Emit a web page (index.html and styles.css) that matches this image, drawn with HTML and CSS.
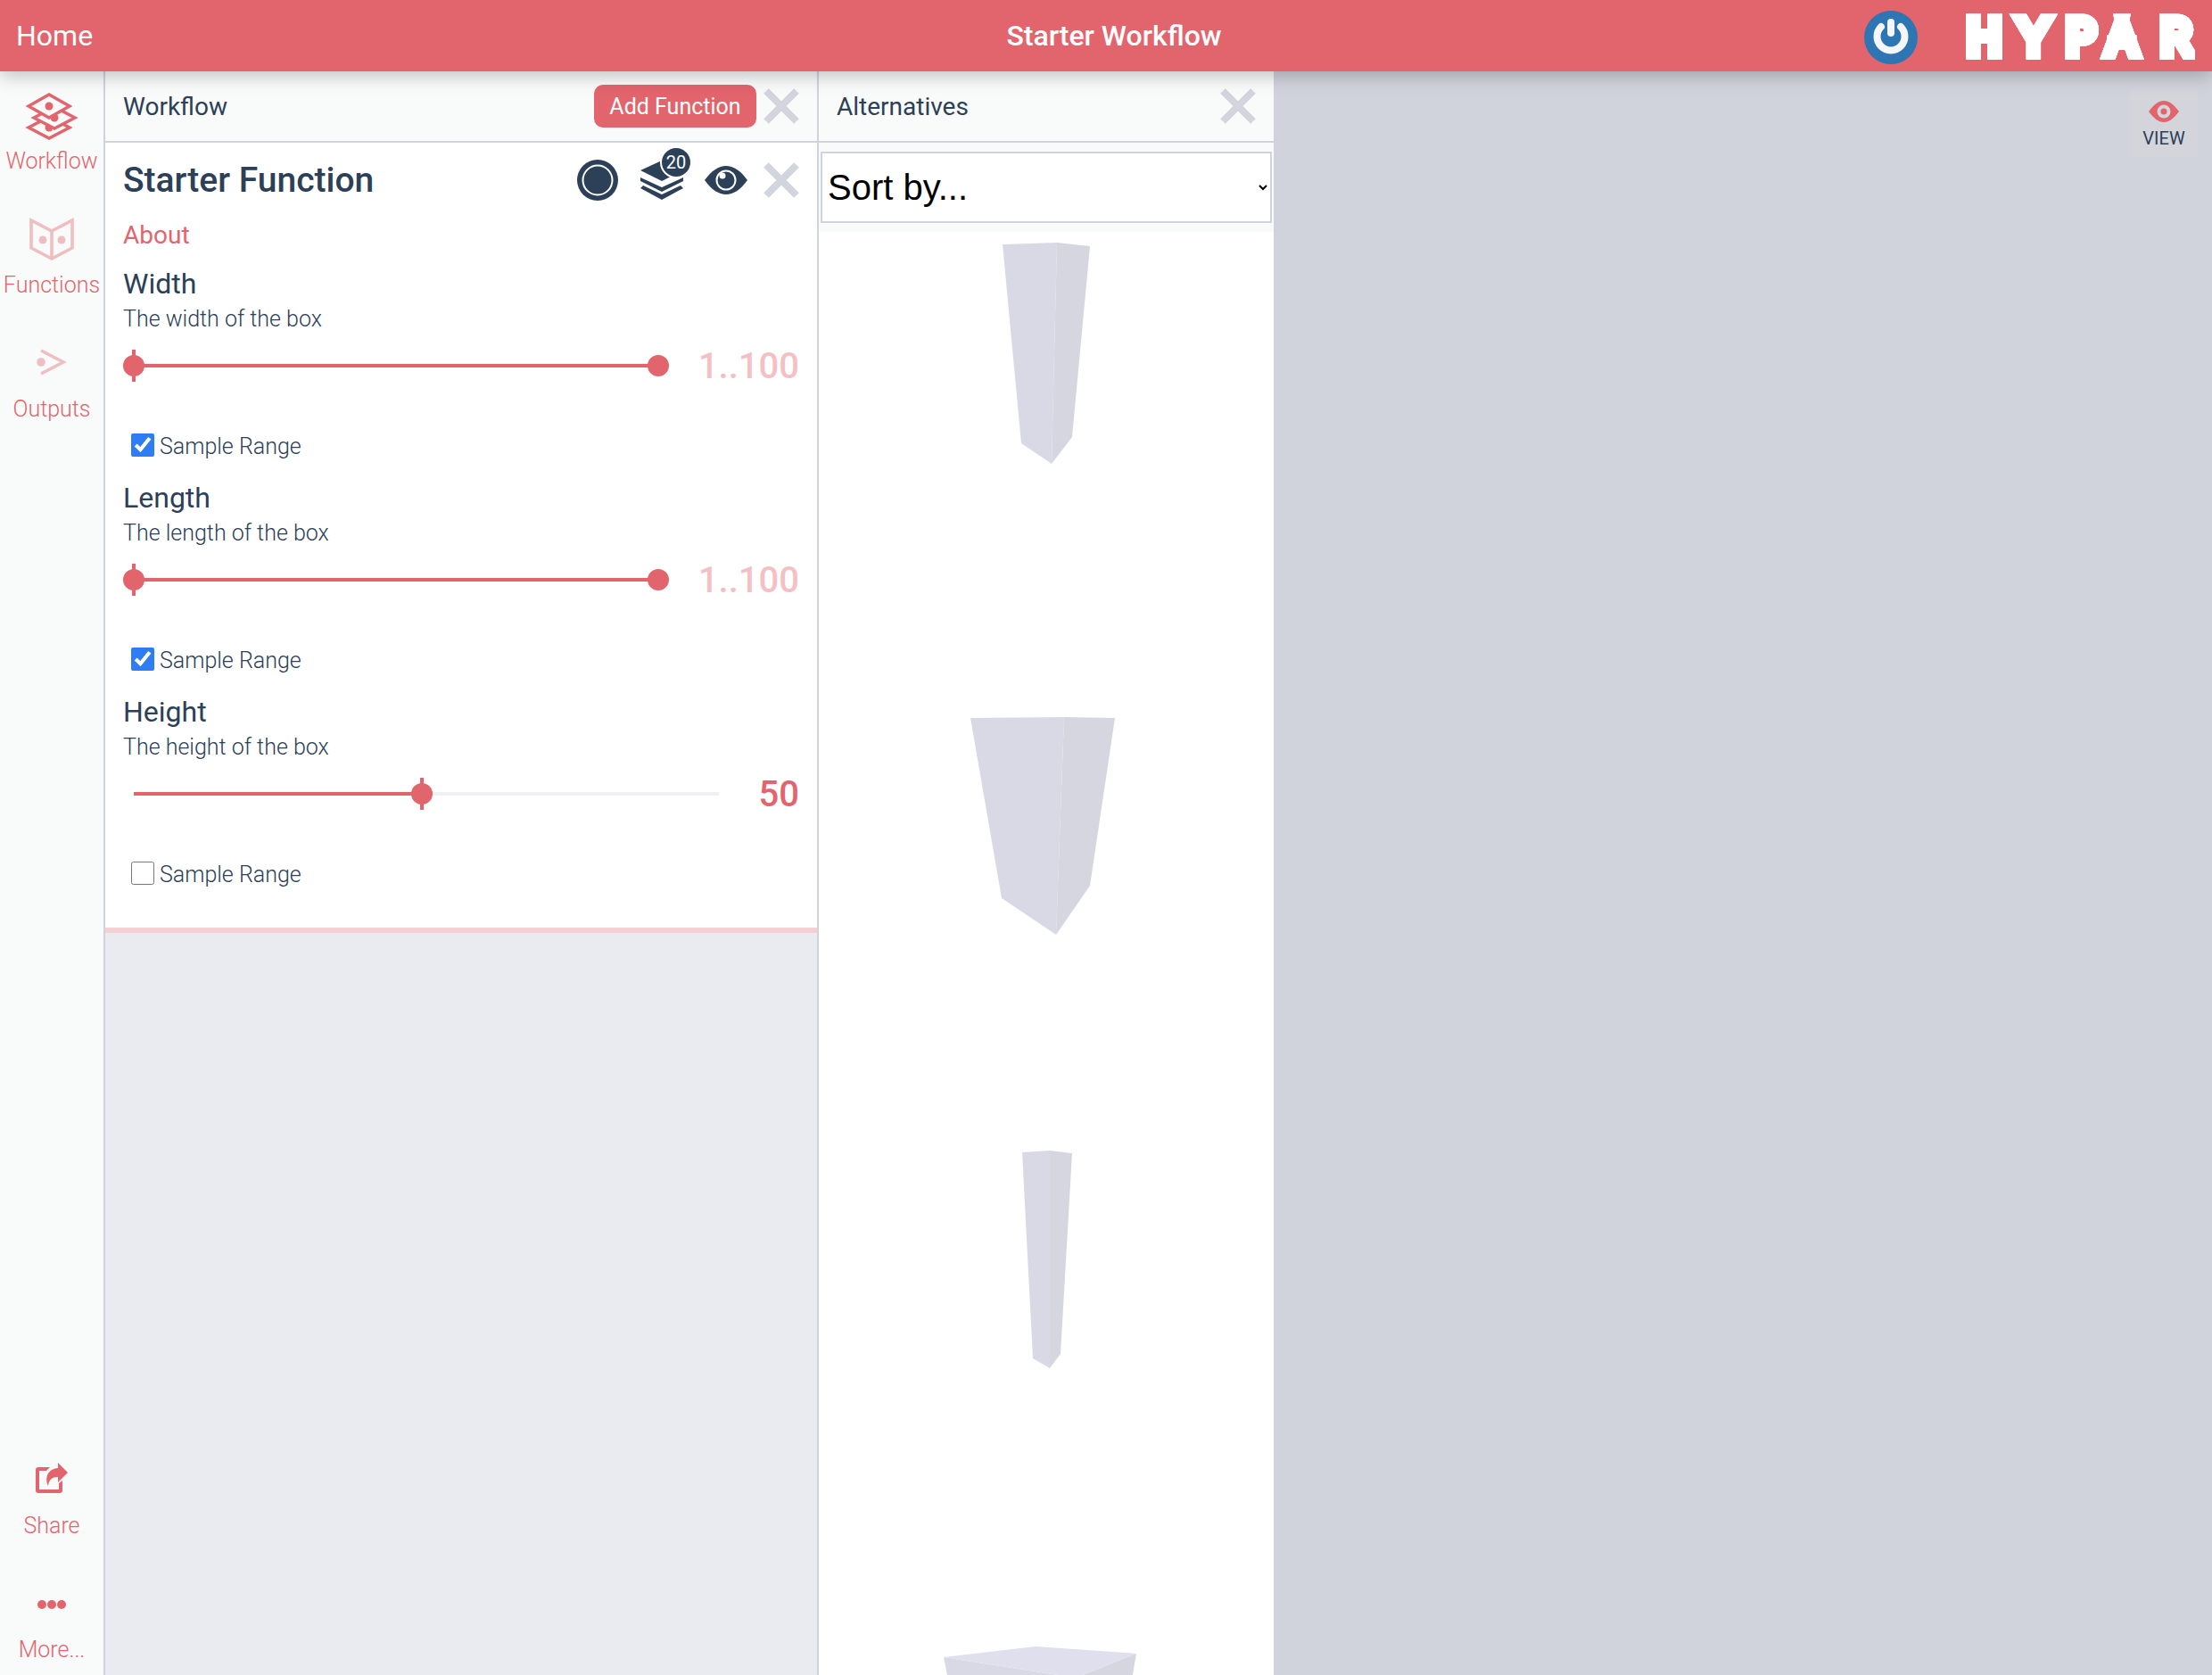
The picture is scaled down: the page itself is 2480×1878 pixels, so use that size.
FILE: index.html
```html
<!DOCTYPE html>
<html lang="en">
<head>
  <meta charset="UTF-8">
  <title>Starter Workflow</title>
  <link rel="stylesheet" href="styles.css">
</head>
<body>
  <div class="app">

    <!-- Top bar -->
    <header class="topbar">
      <div class="topbar-home">Home</div>
      <div class="topbar-title">Starter Workflow</div>
      <div class="topbar-right">
        <svg class="power" width="60" height="60" viewBox="0 0 60 60">
          <circle cx="30" cy="30" r="30" fill="#2e75b4"/>
          <path d="M19 18 A 15.5 15.5 0 1 0 41 18" fill="none" stroke="#f4f6f8" stroke-width="8" stroke-linecap="round"/>
          <path d="M30 13 V 25" fill="none" stroke="#f4f6f8" stroke-width="8" stroke-linecap="round"/>
        </svg>
        <svg class="logo" width="275" height="80" viewBox="0 0 275 80">
          <text id="hypar-word" class="logo-layer logo-w1" x="7 65 118 164 224" y="58.5">HYPAR</text>
          <use href="#hypar-word" class="logo-r1"/>
          <use href="#hypar-word" class="logo-w2"/>
          <use href="#hypar-word" class="logo-r2"/>
        </svg>
      </div>
    </header>

    <div class="main">

      <!-- Left nav -->
      <nav class="sidebar">
        <div class="nav-group">
          <div class="nav-item">
            <svg class="nav-icon" width="60" height="60" viewBox="0 0 60 60" fill="#f9fbfa" stroke="#e2646d" stroke-width="3.4">
              <path d="M4 43 L27 31 L50 43 L27 55 Z"/>
              <circle cx="27" cy="43" r="4.5" fill="#e2646d" stroke="none"/>
              <path d="M10 32 L33 20 L56 32 L33 44 Z"/>
              <circle cx="33" cy="32" r="4.5" fill="#e2646d" stroke="none"/>
              <path d="M4 19 L27 6 L50 19 L27 32 Z"/>
              <circle cx="27" cy="19" r="4.5" fill="#e2646d" stroke="none"/>
            </svg>
            <span>Workflow</span>
          </div>
          <div class="nav-item">
            <svg class="nav-icon dim" width="60" height="60" viewBox="0 0 60 60" fill="none" stroke="#e2646d" stroke-width="3.6">
              <path d="M7 8 L30 20 L53 8 V 39 L30 51 L7 39 Z"/>
              <path d="M30 20 V 51"/>
              <circle cx="20" cy="30" r="4.5" fill="#e2646d" stroke="none"/>
              <circle cx="41" cy="30" r="4.5" fill="#e2646d" stroke="none"/>
            </svg>
            <span>Functions</span>
          </div>
          <div class="nav-item">
            <svg class="nav-icon dim" width="60" height="60" viewBox="0 0 60 60" fill="none" stroke="#e2646d" stroke-width="3.6">
              <path d="M18 15 L43 28 L18 41"/>
              <circle cx="18" cy="28" r="4.8" fill="#e2646d" stroke="none"/>
            </svg>
            <span>Outputs</span>
          </div>
        </div>
        <div class="nav-group">
          <div class="nav-item">
            <svg class="nav-icon" width="60" height="60" viewBox="0 0 60 60" fill="#e2646d">
              <path d="M12 18 Q12 15 15 15 H28 L24 19 H16 V40 H38 V33 L42 30 V41 Q42 44 39 44 H15 Q12 44 12 41 Z"/>
              <path d="M37 10 L48 21 L37 32 V26 C30 26 27 29 26 36 C22 27 25 17 37 16 Z"/>
            </svg>
            <span>Share</span>
          </div>
          <div class="nav-item nav-more">
            <svg class="nav-icon" width="60" height="60" viewBox="0 0 60 60" fill="#e2646d">
              <circle cx="19" cy="30" r="5"/>
              <circle cx="30" cy="30" r="5"/>
              <circle cx="41" cy="30" r="5"/>
            </svg>
            <span>More...</span>
          </div>
        </div>
      </nav>

      <!-- Workflow panel -->
      <section class="panel panel-workflow">
        <div class="panel-head">
          <div class="panel-title">Workflow</div>
          <button class="btn-add">Add Function</button>
          <svg class="close" width="40" height="40" viewBox="0 0 40 40"><path d="M3 3 L37 37 M37 3 L3 37"/></svg>
        </div>

        <div class="card">
          <div class="card-head">
            <h2 class="card-title">Starter Function</h2>
            <svg class="tool tool-ring" width="46" height="46" viewBox="0 0 46 46">
              <circle cx="23" cy="23" r="23" fill="#2c4058"/>
              <circle cx="23" cy="23" r="16.5" fill="#2c4058" stroke="#fff" stroke-width="2"/>
            </svg>
            <div class="tool tool-layers">
              <svg width="48" height="44" viewBox="0 0 48 44" fill="#2c4058">
                <path d="M0 11 L24 0 L48 11 L24 23 Z"/>
                <path d="M0 23 V19 L24 30 L48 19 V23 L24 35 Z"/>
                <path d="M3 28 L24 38 L45 28 L48 31 L24 44 L0 31 Z"/>
              </svg>
              <span class="badge">20</span>
            </div>
            <svg class="tool tool-eye" width="48" height="32" viewBox="0 0 48 32">
              <path d="M0 16 C8 5 16 0 24 0 C32 0 40 5 48 16 C40 27 32 32 24 32 C16 32 8 27 0 16 Z" fill="#2c4058"/>
              <circle cx="24" cy="16" r="10.5" fill="#2c4058" stroke="#fff" stroke-width="2"/>
              <circle cx="20" cy="11" r="3.5" fill="#fff"/>
            </svg>
            <svg class="close" width="40" height="40" viewBox="0 0 40 40"><path d="M3 3 L37 37 M37 3 L3 37"/></svg>
          </div>

          <div class="about">About</div>

          <div class="field">
            <div class="field-name">Width</div>
            <div class="field-desc">The width of the box</div>
            <div class="slider">
              <div class="track">
                <div class="track-fill" style="width: 100%"></div>
                <div class="thumb thumb-tick" style="left: 0%"></div>
                <div class="thumb" style="left: 100%"></div>
              </div>
              <div class="value value-range">1..100</div>
            </div>
            <label class="sample"><input type="checkbox" checked>Sample Range</label>
          </div>

          <div class="field">
            <div class="field-name">Length</div>
            <div class="field-desc">The length of the box</div>
            <div class="slider">
              <div class="track">
                <div class="track-fill" style="width: 100%"></div>
                <div class="thumb thumb-tick" style="left: 0%"></div>
                <div class="thumb" style="left: 100%"></div>
              </div>
              <div class="value value-range">1..100</div>
            </div>
            <label class="sample"><input type="checkbox" checked>Sample Range</label>
          </div>

          <div class="field">
            <div class="field-name">Height</div>
            <div class="field-desc">The height of the box</div>
            <div class="slider">
              <div class="track">
                <div class="track-fill" style="width: 49.3%"></div>
                <div class="thumb thumb-tick" style="left: 49.3%"></div>
              </div>
              <div class="value">50</div>
            </div>
            <label class="sample"><input type="checkbox">Sample Range</label>
          </div>
        </div>
      </section>

      <!-- Alternatives panel -->
      <section class="panel panel-alts">
        <div class="panel-head">
          <div class="panel-title">Alternatives</div>
          <svg class="close" width="40" height="40" viewBox="0 0 40 40"><path d="M3 3 L37 37 M37 3 L3 37"/></svg>
        </div>
        <div class="sort-bar">
          <select class="sort">
            <option>Sort by...</option>
          </select>
        </div>
        <div class="alts">
          <svg class="alt" viewBox="0 0 510 506">
            <polygon class="face-l" points="206,14 267,12 261,260 227,237"/>
            <polygon class="face-r" points="267,12 304,16 284,230 261,260"/>
          </svg>
          <svg class="alt" viewBox="0 0 510 506">
            <polygon class="face-l" points="170,39 275,38 266,282 205,241"/>
            <polygon class="face-r" points="275,38 332,39 304,227 266,282"/>
          </svg>
          <svg class="alt" viewBox="0 0 510 506">
            <polygon class="face-l" points="228,20 259,18 259,262 240,251"/>
            <polygon class="face-r" points="259,18 284,21 271,246 259,262"/>
          </svg>
          <svg class="alt" viewBox="0 0 510 506">
            <polygon class="face-l" points="140,80 268,100 268,200 160,180"/>
            <polygon class="face-r" points="356,76 296,100 296,200 340,170"/>
            <polygon class="face-t" points="140,80 243,68 356,76 296,100 268,100"/>
          </svg>
        </div>
      </section>

      <!-- Model view -->
      <div class="canvas">
        <div class="view-btn">
          <svg width="34" height="24" viewBox="0 0 34 24">
            <path d="M0 12 C6 4 11 0 17 0 C23 0 28 4 34 12 C28 20 23 24 17 24 C11 24 6 20 0 12 Z" fill="#e2646d"/>
            <circle cx="17" cy="12" r="7.5" fill="#d4d5da"/>
            <circle cx="17" cy="12" r="3.5" fill="#e2646d"/>
          </svg>
          <span>VIEW</span>
        </div>
      </div>
    </div>
  </div>
</body>
</html>
```

FILE: styles.css
```css
* {
  box-sizing: border-box;
}

body {
  margin: 0;
  font-family: Roboto, Arial, sans-serif;
  color: #2c4058;
}

.app {
  display: flex;
  flex-direction: column;
  height: 100vh;
  overflow: hidden;
}

/* Top bar */
.topbar {
  position: relative;
  z-index: 2;
  flex: 0 0 80px;
  display: grid;
  grid-template-columns: 1fr auto 1fr;
  align-items: center;
  padding: 0 0 0 18px;
  background-color: #e2646d;
  color: #fff;
  box-shadow: 0 4px 20px rgba(0, 0, 0, 0.25);
}

.topbar-home {
  font-size: 32px;
}

.topbar-title {
  font-size: 32px;
  font-weight: 500;
}

.topbar-right {
  display: flex;
  align-items: center;
  justify-content: flex-end;
}

.power {
  margin-right: 50px;
  margin-top: 4px;
}

.logo {
  margin-right: 5px;
}

.logo-layer {
  font-family: Roboto, sans-serif;
  font-size: 50px;
  font-weight: 100;
  stroke-linejoin: miter;
  stroke-miterlimit: 10;
}

.logo-w1 { fill: #fff; stroke: #fff; stroke-width: 15px; }
.logo-r1 { fill: #e2646d; stroke: #e2646d; stroke-width: 12px; }
.logo-w2 { fill: #fff; stroke: #fff; stroke-width: 8px; }
.logo-r2 { fill: #e2646d; stroke: #e2646d; stroke-width: 5px; }

.main {
  flex: 1;
  display: flex;
  min-height: 0;
}

/* Left nav */
.sidebar {
  flex: 0 0 118px;
  display: flex;
  flex-direction: column;
  justify-content: space-between;
  background-color: #f9fbfa;
  border-right: 2px solid #d0d2de;
}

.nav-item {
  display: flex;
  flex-direction: column;
  align-items: center;
  height: 139px;
  padding-top: 20px;
  font-size: 25px;
  font-weight: 300;
  color: #e2646d;
}

.nav-more {
  height: 129px;
}

.nav-icon {
  margin-bottom: 6px;
}

.dim {
  opacity: 0.4;
}

/* Panels */
.panel {
  display: flex;
  flex-direction: column;
}

.panel-workflow {
  flex: 0 0 800px;
  background-color: #e9ebf0;
  border-right: 2px solid #d0d2de;
}

.panel-alts {
  flex: 0 0 510px;
  background-color: #fff;
}

.panel-head {
  flex: 0 0 80px;
  display: flex;
  align-items: center;
  padding: 0 20px;
  background-color: #f9fbfa;
  border-bottom: 2px solid #d0d2de;
}

.panel-title {
  flex: 1;
  font-size: 28px;
}

.btn-add {
  width: 182px;
  height: 48px;
  margin-right: 8px;
  padding: 0;
  border: 0;
  border-radius: 10px;
  background-color: #e2646d;
  color: #fff;
  font-family: inherit;
  font-size: 25px;
}

.close {
  flex: none;
}

.close path {
  fill: none;
  stroke: #d2d4de;
  stroke-width: 8;
}

/* Function card */
.card {
  padding: 0 20px 22px;
  background-color: #fff;
  border-bottom: 6px solid #f4d0d3;
}

.card-head {
  display: flex;
  align-items: center;
  height: 84px;
}

.card-title {
  flex: 1;
  margin: 0;
  font-size: 39px;
  font-weight: 500;
}

.tool {
  flex: none;
}

.tool-ring {
  margin-right: 25px;
}

.tool-layers {
  position: relative;
  display: flex;
  margin-right: 24px;
}

.tool-eye {
  margin-right: 18px;
}

.badge {
  position: absolute;
  top: -16px;
  right: -10px;
  width: 36px;
  height: 36px;
  border: 2px solid #fff;
  border-radius: 50%;
  background-color: #2c4058;
  color: #fff;
  font-size: 20px;
  line-height: 32px;
  text-align: center;
}

.about {
  height: 40px;
  margin-bottom: 14px;
  font-size: 28px;
  line-height: 40px;
  color: #e2646d;
}

.field {
  height: 240px;
}

.field-name {
  font-size: 32px;
  line-height: 40px;
}

.field-desc {
  font-size: 25px;
  font-weight: 300;
  line-height: 40px;
}

.slider {
  display: flex;
  align-items: center;
  gap: 45px;
  height: 64px;
  padding-left: 12px;
}

.track {
  position: relative;
  flex: 1;
  height: 4px;
  background-color: #f0f1f4;
}

.track-fill {
  height: 100%;
  background-color: #e2646d;
}

.thumb {
  position: absolute;
  top: -10px;
  width: 24px;
  height: 24px;
  margin-left: -12px;
  border-radius: 50%;
  background-color: #e2646d;
}

.thumb-tick::before {
  content: "";
  position: absolute;
  top: -6px;
  left: 10px;
  width: 4px;
  height: 36px;
  background-color: #e2646d;
}

.value {
  font-size: 40px;
  font-weight: 500;
  color: #e2646d;
}

.value-range {
  opacity: 0.4;
}

.sample {
  display: flex;
  align-items: flex-end;
  gap: 6px;
  margin: 44px 0 0 9px;
  font-size: 25px;
  font-weight: 300;
  line-height: 30px;
}

.sample input {
  width: 26px;
  height: 26px;
  margin: 0 0 4px;
  accent-color: #2f7cf6;
}

/* Alternatives */
.sort-bar {
  padding: 10px 2px;
  background-color: #f9fbfa;
}

.sort {
  display: block;
  width: 100%;
  height: 80px;
  padding: 0 2px;
  border: 2px solid #d0d2de;
  border-radius: 0;
  background-color: #fff;
  color: #000;
  font-family: "Liberation Sans", Arial, sans-serif;
  font-size: 40px;
}

.alts {
  flex: 1;
  min-height: 0;
  overflow: hidden;
}

.alt {
  display: block;
  width: 510px;
  height: 506px;
}

.face-l { fill: #d9d9e5; }
.face-r { fill: #d6d6e1; }
.face-t { fill: #dfdfee; }

/* Model view */
.canvas {
  position: relative;
  flex: 1;
  background-color: #d0d3dc;
}

.view-btn {
  position: absolute;
  top: 20px;
  right: 16px;
  display: flex;
  flex-direction: column;
  align-items: center;
  width: 76px;
  height: 76px;
  padding-top: 13px;
  background-color: #d4d5da;
  font-size: 20px;
}

.view-btn span {
  margin-top: 6px;
}
```
